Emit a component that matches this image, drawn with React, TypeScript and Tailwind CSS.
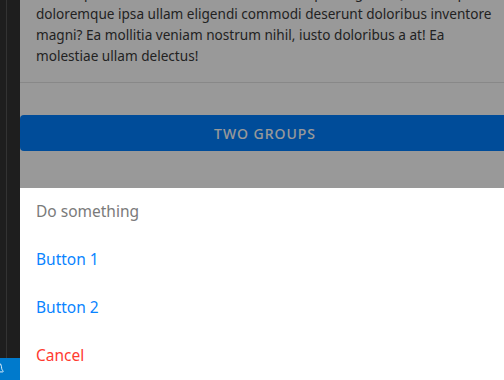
import { Bell } from "lucide-react";

const font = { fontFamily: '"Noto Sans", "Open Sans", sans-serif' };

export default function App() {
  return (
    <div
      className="relative flex w-[504px] h-[380px] overflow-hidden bg-[#1e1e1e]"
      style={font}
    >
      {/* editor gutter */}
      <div className="flex flex-col w-[20px] shrink-0">
        <div className="flex flex-1">
          <div className="w-[6px] bg-[#1e1e1e]" />
          <div className="w-px bg-[#333333]" />
          <div className="flex-1 bg-[#1e1e1e]" />
        </div>
        <div className="h-[22px] bg-[#007acc] overflow-hidden relative">
          <Bell className="absolute -left-[9px] top-[4px] w-[14px] h-[14px] text-white" strokeWidth={1.5} />
        </div>
      </div>

      {/* phone page */}
      <div className="relative w-[490px] shrink-0 bg-white">
        <div className="-mt-[18px] pl-4 text-[13.6px] leading-[21px] text-[#3a3a3a] whitespace-nowrap">
          <div>Lorem ipsum dolor sit amet consectetur adipisicing elit. Quaerat, quo</div>
          <div>doloremque ipsa ullam eligendi commodi deserunt doloribus inventore</div>
          <div>magni? Ea mollitia veniam nostrum nihil, iusto doloribus a at! Ea</div>
          <div>molestiae ullam delectus!</div>
        </div>
        <div className="mt-4 h-px bg-[#e3e3e3]" />
        <button
          type="button"
          className="mt-8 flex w-full h-[36px] items-center justify-center rounded-[4px] bg-[#007fff] text-white text-[14px] font-medium tracking-[0.07em]"
        >
          TWO GROUPS
        </button>

        {/* backdrop */}
        <div className="absolute inset-0 bg-black/40" />

        {/* action sheet */}
        <div className="absolute left-0 right-0 top-[188px] bg-white text-[15.5px]">
          <div className="h-[48px] flex items-center pl-4 text-[#7a7a7a]">Do something</div>
          <div className="h-[48px] flex items-center pl-4 text-[#0a84ff]">Button 1</div>
          <div className="h-[48px] flex items-center pl-4 text-[#0a84ff]">Button 2</div>
          <div className="h-[48px] flex items-center pl-4 text-[#ff3b30]">Cancel</div>
        </div>
      </div>
    </div>
  );
}
